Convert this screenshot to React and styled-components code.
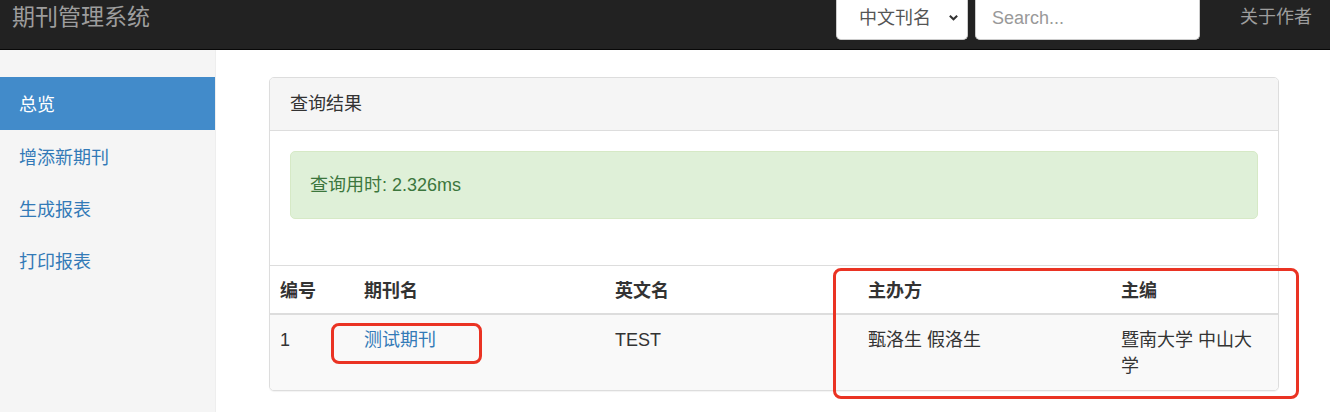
import React from "react";
import styled, { createGlobalStyle } from "styled-components";

const GlobalStyle = createGlobalStyle`
  html, body {
    margin: 0;
    padding: 0;
    background: #fff;
    font-family: "Liberation Sans", "Noto Sans CJK SC", sans-serif;
    font-size: 18px;
    line-height: 26px;
    color: #333;
  }
  * { box-sizing: border-box; }
`;

const Page = styled.div`
  position: relative;
  width: 1330px;
  height: 412px;
  overflow: hidden;
`;

const Navbar = styled.div`
  height: 50px;
  background: #222;
  border-bottom: 1px solid #080808;
  display: flex;
  align-items: flex-start;
  padding: 0 18px 0 12px;
`;

const Brand = styled.div`
  color: #9d9d9d;
  font-size: 23px;
  line-height: 34px;
  flex: 1;
`;

const SearchForm = styled.form`
  display: flex;
  gap: 7px;
  margin: 0;
`;

const Select = styled.div`
  width: 132px;
  height: 40px;
  background: #fff;
  border: 1px solid #ccc;
  border-top: 0;
  border-radius: 0 0 5px 5px;
  display: flex;
  align-items: center;
  justify-content: space-between;
  padding: 0 8px 4px 22px;
  color: #555;
  font-size: 18px;
`;

const Chevron = styled.svg`
  width: 11px;
  height: 11px;
`;

const Input = styled.div`
  width: 225px;
  height: 40px;
  background: #fff;
  border: 1px solid #ccc;
  border-top: 0;
  border-radius: 0 0 5px 5px;
  color: #999;
  font-size: 18px;
  display: flex;
  align-items: center;
  padding: 0 16px 4px;
`;

const NavLink = styled.div`
  color: #9d9d9d;
  font-size: 18px;
  line-height: 34px;
  margin-left: 40px;
`;

const Body = styled.div`
  display: flex;
  height: 362px;
`;

const Sidebar = styled.div`
  width: 216px;
  flex: none;
  background: #f5f5f5;
  border-right: 1px solid #eee;
  padding-top: 27px;
`;

const SideItem = styled.div`
  height: ${(p) => (p.$active ? 53 : 52)}px;
  display: flex;
  align-items: center;
  padding: 3px 19px 0;
  font-size: 18px;
  color: ${(p) => (p.$active ? "#fff" : "#337ab7")};
  background: ${(p) => (p.$active ? "#428bca" : "transparent")};
`;

const Main = styled.div`
  flex: 1;
  padding: 27px 51px 0 53px;
`;

const Panel = styled.div`
  border: 1px solid #ddd;
  border-radius: 5px;
  background: #fff;
  box-shadow: 0 1px 1px rgba(0, 0, 0, 0.05);
  overflow: hidden;
`;

const PanelHeading = styled.div`
  background: #f5f5f5;
  border-bottom: 1px solid #ddd;
  padding: 13px 20px 13px;
  font-size: 18px;
  color: #333;
`;

const PanelBody = styled.div`
  padding: 20px;
`;

const Alert = styled.div`
  background: #dff0d8;
  border: 1px solid #d6e9c6;
  border-radius: 5px;
  color: #3c763d;
  padding: 20px 19px;
  margin-bottom: 26px;
  font-size: 18px;
`;

const Table = styled.table`
  width: 100%;
  border-collapse: collapse;
  border-top: 1px solid #ddd;
  table-layout: fixed;
`;

const Th = styled.th`
  text-align: left;
  font-weight: bold;
  padding: 12px 10px 9px;
  border-bottom: 2px solid #ddd;
  vertical-align: bottom;
  width: ${(p) => p.$w || "auto"};
`;

const Tr = styled.tr`
  background: ${(p) => (p.$striped ? "#f9f9f9" : "#fff")};
`;

const Td = styled.td`
  padding: 12px 10px 11px;
  vertical-align: top;
`;

const Link = styled.a`
  color: #337ab7;
  text-decoration: none;
`;

const Mark = styled.div`
  position: absolute;
  border: 3px solid #ea3323;
  border-radius: 8px;
  left: ${(p) => p.$x}px;
  top: ${(p) => p.$y}px;
  width: ${(p) => p.$w}px;
  height: ${(p) => p.$h}px;
  pointer-events: none;
`;

const menu = ["总览", "增添新期刊", "生成报表", "打印报表"];

export default function App() {
  return (
    <Page>
      <GlobalStyle />
      <Navbar>
        <Brand>期刊管理系统</Brand>
        <SearchForm>
          <Select>
            中文刊名
            <Chevron viewBox="0 0 12 12">
              <path d="M2 4 L6 8 L10 4" fill="none" stroke="#333" strokeWidth="2.2" />
            </Chevron>
          </Select>
          <Input>Search...</Input>
        </SearchForm>
        <NavLink>关于作者</NavLink>
      </Navbar>
      <Body>
        <Sidebar>
          {menu.map((m, i) => (
            <SideItem key={m} $active={i === 0}>
              {m}
            </SideItem>
          ))}
        </Sidebar>
        <Main>
          <Panel>
            <PanelHeading>查询结果</PanelHeading>
            <PanelBody>
              <Alert>查询用时: 2.326ms</Alert>
            </PanelBody>
            <Table>
              <thead>
                <tr>
                  <Th $w="84px">编号</Th>
                  <Th $w="251px">期刊名</Th>
                  <Th $w="253px">英文名</Th>
                  <Th $w="253px">主办方</Th>
                  <Th>主编</Th>
                </tr>
              </thead>
              <tbody>
                <Tr $striped>
                  <Td>1</Td>
                  <Td>
                    <Link href="#">测试期刊</Link>
                  </Td>
                  <Td>TEST</Td>
                  <Td>甄洛生 假洛生</Td>
                  <Td>暨南大学 中山大学</Td>
                </Tr>
              </tbody>
            </Table>
          </Panel>
        </Main>
      </Body>
      <Mark $x={331} $y={323} $w={151} $h={41} />
      <Mark $x={833} $y={268} $w={466} $h={131} />
    </Page>
  );
}
